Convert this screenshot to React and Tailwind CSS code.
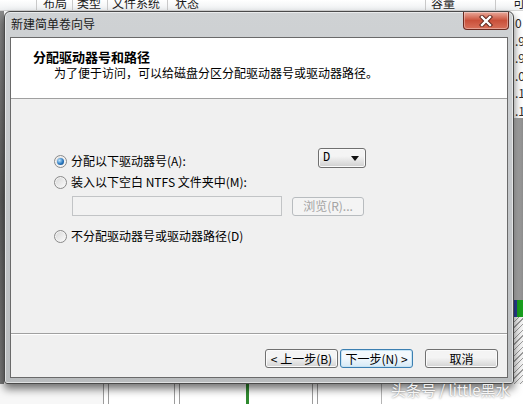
import React from "react";

const FONT = "font-['Noto_Sans_CJK_SC','Noto_Sans',sans-serif]";

function Radio({ checked }) {
  return (
    <span className="w-[13px] h-[13px] rounded-full border border-[#8a8a8a] bg-gradient-to-br from-[#d6d6d6] to-[#fdfdfd] flex items-center justify-center shrink-0 shadow-[inset_0_0_0_1px_#f4f4f4]">
      {checked && (
        <span className="w-[7px] h-[7px] rounded-full bg-[radial-gradient(circle_at_35%_35%,#bfe6ff,#2a78bf_55%,#0c3d73)]" />
      )}
    </span>
  );
}

function WinButton({ children, focused, disabled, className = "" }) {
  const base =
    "h-[19px] rounded-[3px] border flex items-center justify-center text-[12px] leading-none shrink-0 ";
  const look = disabled
    ? "border-[#b8bcbf] bg-[#f4f4f4] text-[#a3a3a3]"
    : focused
    ? "border-[#3c7fb1] bg-gradient-to-b from-[#f3f9fd] from-45% to-[#d5e9f6] text-black shadow-[inset_0_0_0_1px_#c7e4f5]"
    : "border-[#707070] bg-gradient-to-b from-[#f4f4f4] from-45% to-[#d3d3d3] text-black shadow-[inset_0_0_0_1px_#fbfbfb]";
  return <div className={base + look + " " + className}>{children}</div>;
}

function HeaderCell({ w, pl, text, first }) {
  return (
    <div
      className={
        "h-full shrink-0 overflow-hidden " +
        (first ? "" : "border-l border-[#c9c9c9] ") +
        w +
        " " +
        pl
      }
    >
      <div className="text-[12px] leading-[12px] mt-[-3px] text-[#1c1c1c] whitespace-nowrap">{text}</div>
    </div>
  );
}

export default function App() {
  const digits = ["0", ".9", ".9", ".0", ".1", ".1"];
  return (
    <div className={"w-[523px] h-[404px] relative overflow-hidden bg-[#f2f2f2] " + FONT}>
      {/* background window (disk management) */}
      <div className="flex flex-col h-full">
        <div className="h-[11px] flex bg-gradient-to-b from-[#ffffff] to-[#eef0f2] border-b border-[#d6d6d6]">
          <HeaderCell w="w-[36px]" pl="" text="" first />
          <HeaderCell w="w-[36px]" pl="pl-[6px]" text="布局" />
          <HeaderCell w="w-[35px]" pl="pl-[4px]" text="类型" />
          <HeaderCell w="w-[60px]" pl="pl-[4px]" text="文件系统" />
          <HeaderCell w="w-[258px]" pl="pl-[7px]" text="状态" />
          <HeaderCell w="w-[70px]" pl="pl-[5px]" text="容量" />
          <HeaderCell w="flex-1" pl="pl-[17px]" text="可用" />
        </div>
        <div className="flex h-[373px]">
          <div className="w-[4px] shrink-0 bg-gradient-to-b from-[#8a8a8a] via-[#5e5e5e] to-[#7a7a7a]" />
          <div className="flex-1 bg-white" />
          <div className="w-[9px] shrink-0 flex flex-col">
            <div className="h-[107px] bg-white pt-[3px] pl-[1px] flex flex-col">
              {digits.map((d, i) => (
                <div key={i} className="h-[17.6px] text-[12px] leading-[17.6px] text-[#2a2a2a] whitespace-nowrap">
                  {d}
                </div>
              ))}
            </div>
            <div className="h-[182px] bg-gradient-to-r from-[#b9b9b9] to-[#8e8e8e]" />
            <div className="h-[17px] flex">
              <div className="w-[3px] bg-[#2b3f9a]" />
              <div className="flex-1 bg-[#19a11f]" />
            </div>
            <div className="flex-1 bg-[image:repeating-linear-gradient(135deg,#f4f4f4_0px,#f4f4f4_3px,#9c9c9c_3px,#9c9c9c_4px)]" />
          </div>
        </div>
        <div className="flex-1 flex bg-[#f7f7f7]">
          <div className="w-[103px] shrink-0" />
          <div className="w-[6px] shrink-0 border-x border-[#9c9c9c] bg-white" />
          <div className="w-[65px] shrink-0 bg-white" />
          <div className="w-[6px] shrink-0 border-x border-[#9c9c9c] bg-white" />
          <div className="w-[66px] shrink-0 bg-white" />
          <div className="w-[3px] shrink-0 bg-[#2f8a2f]" />
          <div className="w-[63px] shrink-0 bg-white" />
          <div className="w-[6px] shrink-0 border-x border-[#9c9c9c] bg-white" />
          <div className="w-[64px] shrink-0 bg-white border-r border-[#b4b4b4]" />
          <div className="flex-1 bg-white" />
        </div>
      </div>

      {/* wizard dialog */}
      <div className="absolute left-[4px] top-[11px] w-[510px] h-[373px] rounded-t-[6px] rounded-b-[3px] border border-[#4a4a4a] bg-gradient-to-b from-[#cfd2d4] via-[#c4c7ca] to-[#b9bcbe] shadow-[0_5px_9px_rgba(0,0,0,0.55),inset_0_0_0_1px_rgba(255,255,255,0.55)] flex flex-col">
        <div className="h-[25px] shrink-0 flex items-start justify-between">
          <div className="pl-[6px] pt-[5px] text-[12px] leading-[14px] text-[#1a1a1a]">新建简单卷向导</div>
          <div className="mr-[4px] w-[46px] h-[18px] rounded-b-[4px] border border-t-0 border-[#6b2a20] bg-gradient-to-b from-[#e8a99b] via-[#c9503a] to-[#d8705a] flex items-center justify-center shadow-[inset_0_0_0_1px_rgba(255,255,255,0.35)]">
            <svg width="14" height="12" viewBox="0 0 14 12">
              <path d="M3 2 L11 10 M11 2 L3 10" stroke="#5a2218" strokeWidth="4.2" strokeLinecap="square" />
              <path d="M3 2 L11 10 M11 2 L3 10" stroke="#ffffff" strokeWidth="2.4" strokeLinecap="square" />
            </svg>
          </div>
        </div>
        <div className="mx-[5px] mb-[5px] flex-1 border border-[#6a6a6a] flex flex-col overflow-hidden">
          {/* header */}
          <div className="h-[61px] shrink-0 bg-white border-b border-[#a0a0a0] pl-[22px] pt-[11px]">
            <div className="text-[13px] leading-[16px] font-bold text-black">分配驱动器号和路径</div>
            <div className="pl-[21px] text-[12px] leading-[14px] text-black mt-[1px]">
              为了便于访问，可以给磁盘分区分配驱动器号或驱动器路径。
            </div>
          </div>
          {/* body */}
          <div className="h-[235px] shrink-0 bg-[#f0f0f0] border-b border-[#a0a0a0] pl-[43px] pt-[49px] flex flex-col">
            <div className="h-[20px] flex items-start">
              <div className="w-[264px] flex items-center gap-[4px] mt-[6px] h-[14px]">
                <Radio checked />
                <span className="text-[12px] leading-[14px] text-black">分配以下驱动器号(A):</span>
              </div>
              <div className="w-[48px] h-[20px] rounded-[3px] border border-[#707070] bg-gradient-to-b from-[#f4f4f4] from-40% to-[#cfcfcf] flex items-center justify-between pl-[4px] pr-[6px] shadow-[inset_0_0_0_1px_#fafafa]">
                <span className="text-[12px] leading-none font-['Liberation_Mono',monospace] text-black">D</span>
                <svg width="8" height="5" viewBox="0 0 8 5">
                  <path d="M0 0 L8 0 L4 5 Z" fill="#111" />
                </svg>
              </div>
            </div>
            <div className="h-[14px] mt-[7px] flex items-center gap-[4px]">
              <Radio />
              <span className="text-[12px] leading-[14px] text-black">装入以下空白 NTFS 文件夹中(M):</span>
            </div>
            <div className="mt-[7px] ml-[18px] flex items-center gap-[10px]">
              <div className="w-[210px] h-[20px] border border-[#c2c4c6] bg-[#f2f2f2]" />
              <WinButton disabled className="w-[72px]">
                浏览(R)...
              </WinButton>
            </div>
            <div className="h-[14px] mt-[13px] flex items-center gap-[4px]">
              <Radio />
              <span className="text-[12px] leading-[14px] text-black">不分配驱动器号或驱动器路径(D)</span>
            </div>
          </div>
          {/* footer */}
          <div className="flex-1 bg-[#f0f0f0] border-t border-white flex items-start justify-end pr-[9px] pt-[14px]">
            <WinButton className="w-[73px]">&lt; 上一步(B)</WinButton>
            <WinButton focused className="w-[73px] ml-[2px]">
              下一步(N) &gt;
            </WinButton>
            <WinButton className="w-[73px] ml-[12px]">取消</WinButton>
          </div>
        </div>
      </div>

      {/* watermark */}
      <div className="absolute left-[391px] top-[381px] text-[15px] leading-[18px] text-white/90 whitespace-nowrap [text-shadow:0_0_2px_rgba(0,0,0,0.55)]">
        头条号 / little黑水
      </div>
    </div>
  );
}
